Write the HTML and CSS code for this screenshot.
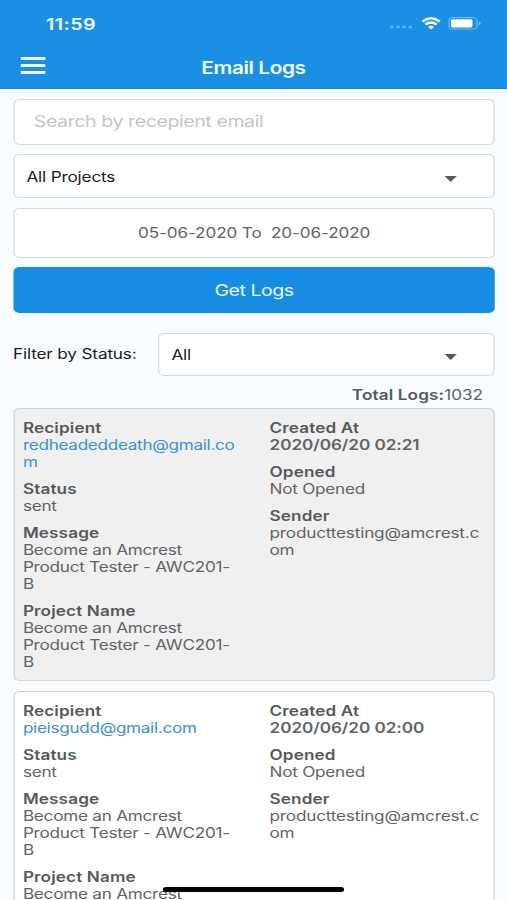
FILE: index.html
```html
<!DOCTYPE html>
<html>

<head>
    <meta charset="utf-8">
    <title>Email Logs</title>
    <link rel="stylesheet" href="styles.css">
</head>

<body>
    <div class="screen">
        <header class="header">
            <div class="status-bar">
                <span class="time">11:59</span>
                <div class="status-icons">
                    <svg class="signal" width="19" height="4" viewBox="0 0 19 4" fill="#fff" fill-opacity="0.32">
                        <circle cx="2" cy="2" r="1.6" />
                        <circle cx="7" cy="2" r="1.6" />
                        <circle cx="12" cy="2" r="1.6" />
                        <circle cx="17" cy="2" r="1.6" />
                    </svg>
                    <svg class="wifi" width="16" height="13" viewBox="0 0 16 13" fill="none" stroke="#fff" stroke-width="2.4">
                        <path d="M0.9 4.6Q8 -2 15.1 4.6" />
                        <path d="M3.5 7.7Q8 3.5 12.5 7.7" />
                        <path d="M5.5 10Q8 7.6 10.5 10L8 12.6Z" fill="#fff" stroke="none" />
                    </svg>
                    <svg class="battery" width="27" height="13" viewBox="0 0 27 13">
                        <rect x="0.5" y="0.5" width="23" height="11.6" rx="3.2" fill="none" stroke="#fff" stroke-opacity="0.4" />
                        <rect x="2.2" y="2.2" width="17.6" height="8.2" rx="1.4" fill="#fff" />
                        <path d="M25 4.3Q26.4 5 26.4 6.3Q26.4 7.6 25 8.3Z" fill="#fff" fill-opacity="0.45" />
                    </svg>
                </div>
            </div>
            <div class="nav-bar">
                <div class="menu">
                    <span></span>
                    <span></span>
                    <span></span>
                </div>
                <h1>Email Logs</h1>
            </div>
        </header>

        <main class="content">
            <div class="box search"><span>Search by recepient email</span></div>
            <div class="box select">
                <span>All Projects</span>
                <i class="arrow"></i>
            </div>
            <div class="box date"><span>05-06-2020 To&nbsp; 20-06-2020</span></div>
            <div class="button"><span>Get Logs</span></div>

            <div class="filter">
                <span class="filter-label">Filter by Status:</span>
                <div class="box select">
                    <span>All</span>
                    <i class="arrow"></i>
                </div>
            </div>
            <div class="total"><b>Total Logs:</b><span>1032</span></div>

            <div class="card grey">
                <div class="col">
                    <div class="field"><b>Recipient</b><p class="link">redheadeddeath@gmail.co<br>m</p></div>
                    <div class="field"><b>Status</b><p>sent</p></div>
                    <div class="field"><b>Message</b><p>Become an Amcrest<br>Product Tester - AWC201-<br>B</p></div>
                    <div class="field"><b>Project Name</b><p>Become an Amcrest<br>Product Tester - AWC201-<br>B</p></div>
                </div>
                <div class="col">
                    <div class="field"><b>Created At</b><p class="created">2020/06/20 02:21</p></div>
                    <div class="field"><b>Opened</b><p>Not Opened</p></div>
                    <div class="field"><b>Sender</b><p class="sender">producttesting@amcrest.c<br>om</p></div>
                </div>
            </div>

            <div class="card">
                <div class="col">
                    <div class="field"><b>Recipient</b><p class="link">pieisgudd@gmail.com</p></div>
                    <div class="field"><b>Status</b><p>sent</p></div>
                    <div class="field"><b>Message</b><p>Become an Amcrest<br>Product Tester - AWC201-<br>B</p></div>
                    <div class="field"><b>Project Name</b><p>Become an Amcrest</p></div>
                </div>
                <div class="col">
                    <div class="field"><b>Created At</b><p class="created">2020/06/20 02:00</p></div>
                    <div class="field"><b>Opened</b><p>Not Opened</p></div>
                    <div class="field"><b>Sender</b><p class="sender">producttesting@amcrest.c<br>om</p></div>
                </div>
            </div>
        </main>
        <div class="home-bar"></div>
    </div>
</body>

</html>
```
FILE: styles.css
```css
html,
body {
    height: 100%;
    margin: 0;
    padding: 0;
    overflow: hidden;
}

* {
    box-sizing: border-box;
}

.screen {
    position: relative;
    width: 414px;
    height: 900px;
    overflow: hidden;
    transform: scaleX(1.22464);
    transform-origin: 0 0;
    background-color: #f8fcff;
    font-family: Inter, "Liberation Sans", sans-serif;
    font-size: 14px;
    line-height: 17px;
    color: #626366;
    white-space: nowrap;
}

/* header */
.header {
    height: 89px;
    background-color: #1a90e4;
    border-bottom: 1px solid #1883d0;
    color: #f2fbff;
}

.status-bar {
    display: flex;
    justify-content: space-between;
    height: 46px;
    padding: 14px 20px 0 37.5px;
}

.time {
    font-size: 16px;
    font-weight: 600;
    line-height: 20px;
    letter-spacing: 0.4px;
}

.status-icons {
    display: flex;
    align-items: flex-start;
    padding-top: 3px;
}

.signal {
    margin-top: 8px;
}

.wifi {
    margin-left: 7px;
}

.battery {
    margin-left: 6px;
    margin-right: 1px;
}

.nav-bar {
    display: grid;
    grid-template-columns: 40px 1fr 40px;
    align-items: center;
    height: 42px;
}

.menu {
    display: flex;
    flex-direction: column;
    gap: 4px;
    width: 19.5px;
    margin: -3px 0 0 17px;
}

.menu span {
    height: 3px;
    background-color: #f2fbff;
}

h1 {
    margin: 1px 0 0;
    font-size: 17px;
    font-weight: 600;
    line-height: 22px;
    letter-spacing: -0.33px;
    text-align: center;
}

/* form */
.content {
    padding: 10px 9.6px 0 10.6px;
}

.box {
    display: flex;
    align-items: center;
    margin-bottom: 10px;
    border: 1px solid #d6d9dc;
    border-radius: 5px;
    background-color: #fff;
}

.search {
    height: 46px;
    margin-bottom: 9px;
    padding: 0 16px 2px;
    font-size: 16px;
    letter-spacing: -0.36px;
    color: #c5c5c7;
}

.select {
    justify-content: space-between;
    height: 44px;
    padding: 0 30px 0 10px;
    letter-spacing: -0.14px;
    color: #1a1a1c;
}

.select span {
    margin-top: 0;
}

.arrow {
    margin-top: 5px;
    border: 5.5px solid transparent;
    border-top: 6px solid #55585b;
    border-bottom: 0;
}

.date {
    justify-content: center;
    height: 50px;
    margin-bottom: 9px;
    padding-bottom: 2px;
    letter-spacing: -0.1px;
}

.button {
    display: flex;
    justify-content: center;
    align-items: center;
    height: 46px;
    margin-bottom: 20px;
    border-radius: 5px;
    background-color: #168de2;
    font-size: 16px;
    letter-spacing: -0.4px;
    color: #e9f7ff;
}

.filter {
    display: grid;
    grid-template-columns: 118.4px 1fr;
    align-items: center;
    color: #1a1a1c;
}

.filter .box {
    height: 43px;
    margin-bottom: 0;
    padding-bottom: 1px;
}

.filter-label {
    margin-top: -2px;
    letter-spacing: -0.12px;
}

.total {
    margin: 10px 10px 5px;
    text-align: right;
}

/* log cards */
.card {
    display: grid;
    grid-template-columns: 201.4px 1fr;
    margin-bottom: 10px;
    padding: 10px 0 9.5px 7.1px;
    border: 1px solid #d0d4d7;
    border-radius: 5px;
    background-color: #fff;
}

.grey {
    background-color: #f0f0f0;
}

.field {
    margin-bottom: 10px;
}

.field:last-child {
    margin-bottom: 0;
}

.field p {
    margin: 0;
    letter-spacing: -0.2px;
}

b {
    font-weight: 600;
    letter-spacing: 0.1px;
    color: #56595c;
}

.field .link {
    letter-spacing: -0.25px;
    color: #3b90d6;
}

.field .sender {
    letter-spacing: -0.15px;
}

.field .created {
    font-weight: 600;
    letter-spacing: -0.05px;
}

.home-bar {
    position: absolute;
    left: 133px;
    bottom: 8px;
    width: 148px;
    height: 5px;
    border-radius: 3px;
    background-color: #000;
}
```
